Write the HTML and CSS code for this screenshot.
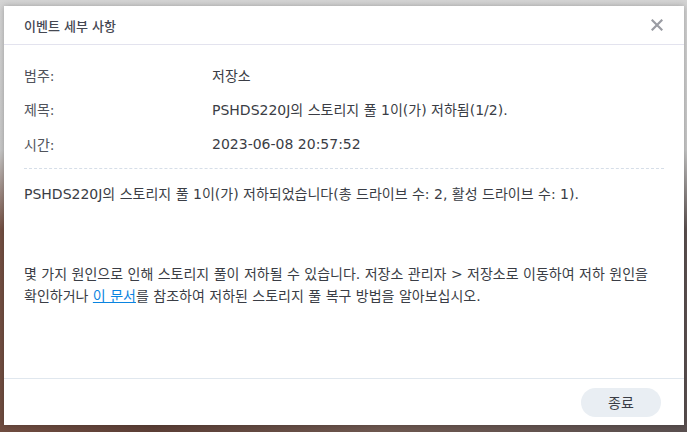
FILE: index.html
```html
<!DOCTYPE html>
<html lang="ko">
<head>
<meta charset="utf-8">
<link rel="stylesheet" href="styles.css">
</head>
<body>
<div class="backdrop">
  <div class="dialog">
    <div class="header">
      <span class="title">이벤트 세부 사항</span>
      <svg class="close" width="12" height="12" viewBox="0 0 12 12"><path d="M1.5 1.5 L10.5 10.5 M10.5 1.5 L1.5 10.5" stroke="#9a9ca3" stroke-width="2.2" stroke-linecap="square"/></svg>
    </div>
    <div class="content">
      <div class="rows">
        <div class="row"><span class="label">범주:</span><span class="value">저장소</span></div>
        <div class="row"><span class="label">제목:</span><span class="value">PSHDS220J의 스토리지 풀 1이(가) 저하됨(1/2).</span></div>
        <div class="row"><span class="label">시간:</span><span class="value">2023-06-08 20:57:52</span></div>
      </div>
      <div class="desc">
        <p class="p1">PSHDS220J의 스토리지 풀 1이(가) 저하되었습니다(총 드라이브 수: 2, 활성 드라이브 수: 1).</p>
        <p class="p2">몇 가지 원인으로 인해 스토리지 풀이 저하될 수 있습니다. 저장소 관리자 &gt; 저장소로 이동하여 저하 원인을 확인하거나 <a class="link" href="#">이 문서</a>를 참조하여 저하된 스토리지 풀 복구 방법을 알아보십시오.</p>
      </div>
    </div>
    <div class="footer">
      <button class="btn">종료</button>
    </div>
  </div>
</div>
</body>
</html>
```

FILE: styles.css
```css
html, body {
  margin: 0;
  padding: 0;
}
body {
  width: 687px;
  height: 432px;
  overflow: hidden;
  font-family: "DejaVu Sans", "Noto Sans CJK KR", sans-serif;
  font-size: 14px;
}
.backdrop {
  width: 687px;
  height: 432px;
  padding: 6px 0 0 4px;
  box-sizing: border-box;
  background:
    linear-gradient(180deg, #d4d4d4 0px, #c9c9c9 150px, rgba(0,0,0,0) 230px),
    linear-gradient(100deg, #7a5446 0%, #5c3f36 30%, #6e5850 60%, #5a5050 100%);
}
.dialog {
  width: 680px;
  height: 419px;
  background: #fff;
  display: flex;
  flex-direction: column;
  box-shadow: 0 0 6px rgba(0,0,0,0.25);
}
.header {
  height: 38px;
  border-bottom: 1px solid #e3e3ee;
  display: flex;
  align-items: center;
  justify-content: space-between;
  padding: 0 21px 0 20px;
}
.title {
  color: #454852;
  font-size: 13px;
  font-weight: 500;
}
.close {
  display: block;
}
.content {
  flex: 1;
  padding: 12.5px 20px 0 20px;
  color: #3a3d45;
}
.rows {
  border-bottom: 1px dashed #d6dee8;
  padding-bottom: 7px;
}
.row {
  display: flex;
  height: 34.5px;
  align-items: center;
}
.label {
  width: 188px;
  color: #50535b;
}
.value {
  color: #3a3d45;
}
.desc p {
  margin: 0;
  line-height: 22px;
}
.p1 {
  margin-top: 14px !important;
}
.p2 {
  margin-top: 58px !important;
}
.link {
  color: #0a84e0;
  text-decoration: underline;
}
.footer {
  height: 46px;
  border-top: 1px solid #e0e7ee;
  display: flex;
  align-items: center;
  justify-content: flex-end;
  padding-right: 23px;
}
.btn {
  width: 80px;
  height: 29px;
  border: none;
  border-radius: 15px;
  background: #e9eef3;
  color: #3a3d45;
  font-family: "DejaVu Sans", "Noto Sans CJK KR", sans-serif;
  font-size: 14px;
  padding: 0;
}
```
